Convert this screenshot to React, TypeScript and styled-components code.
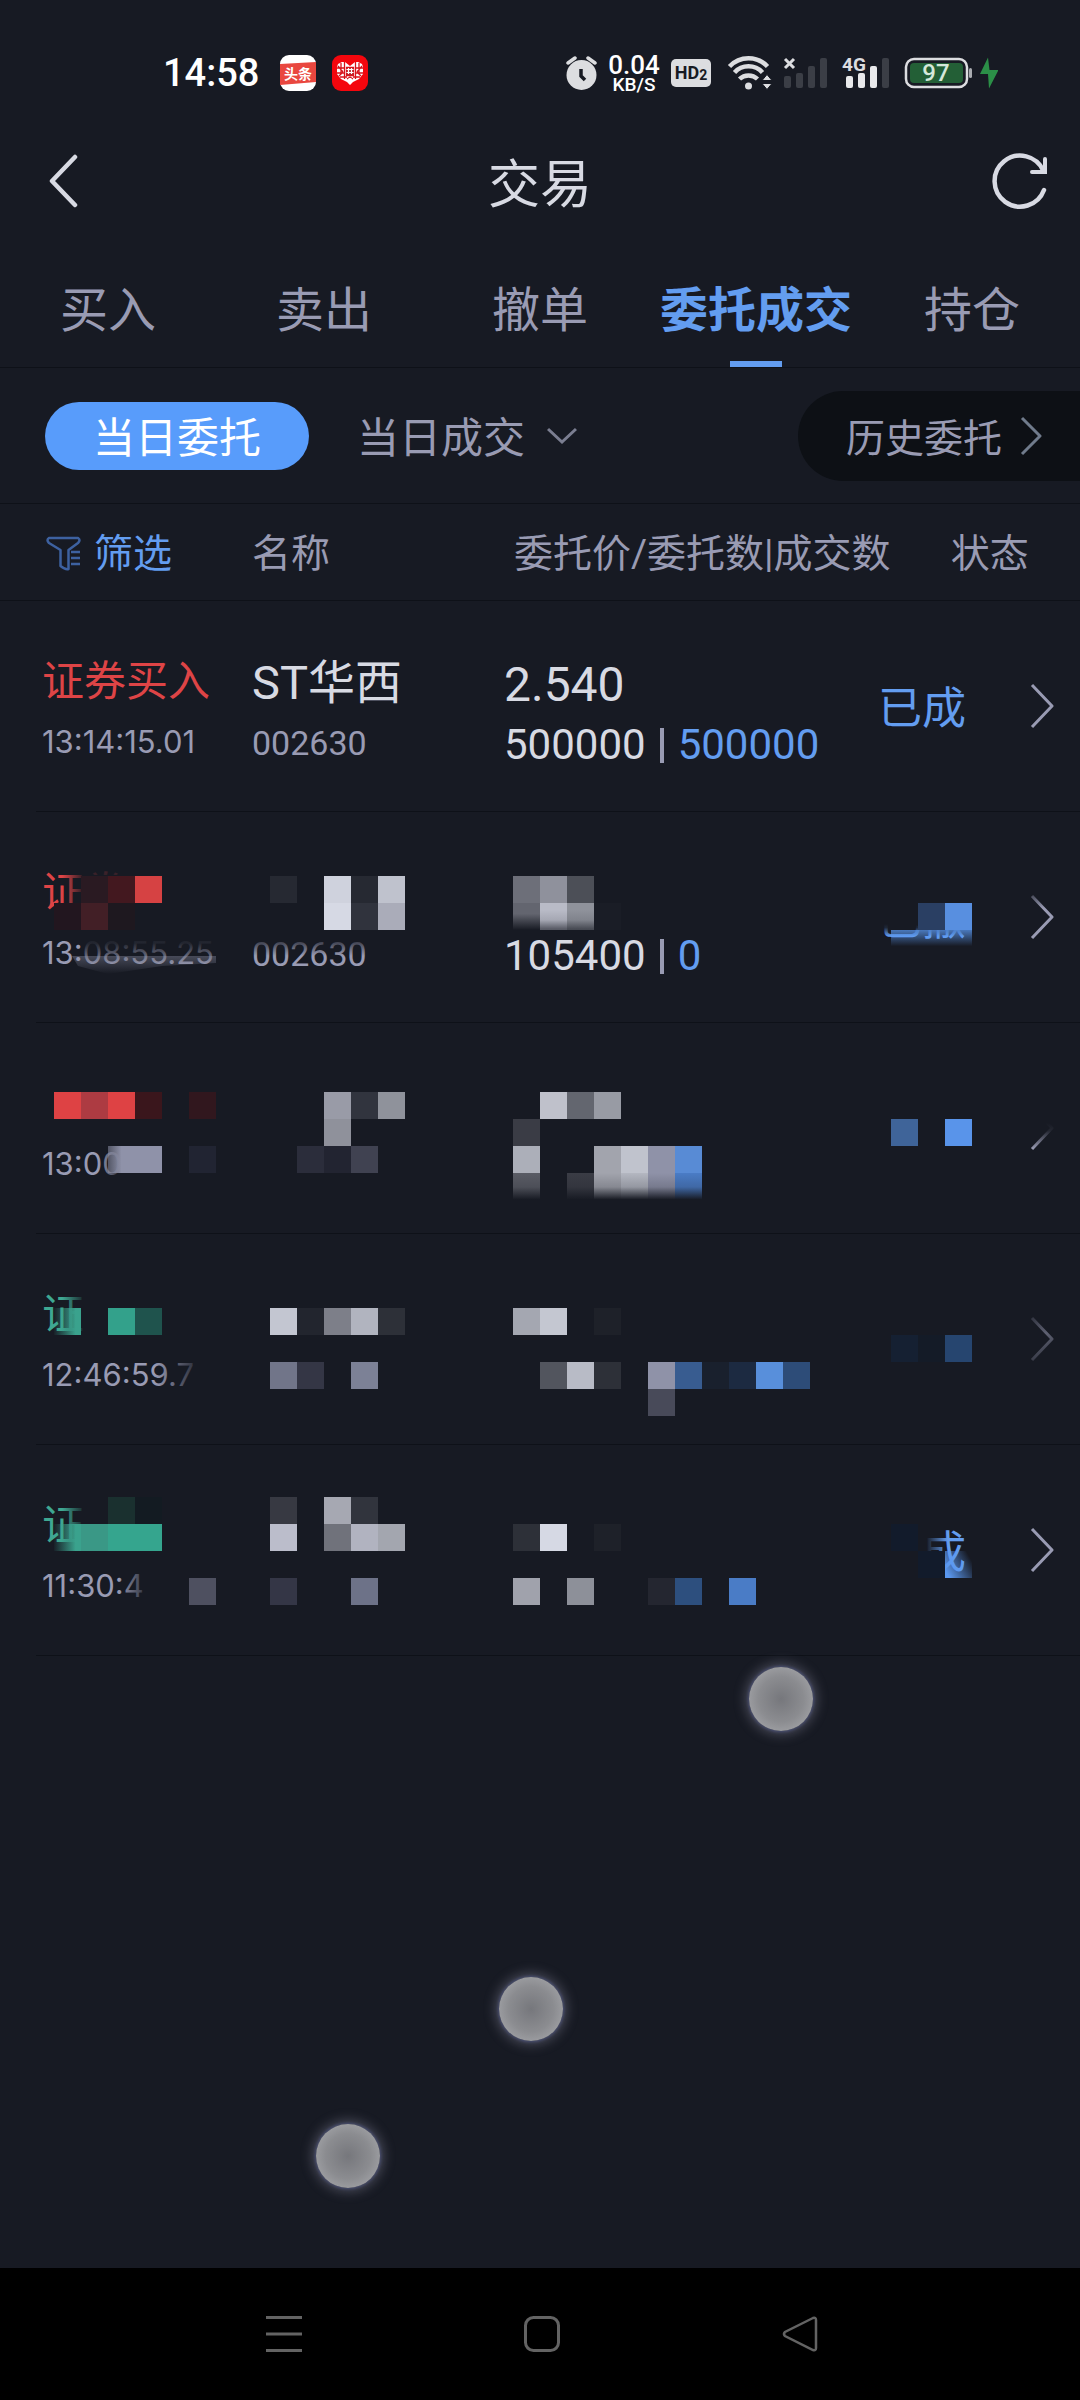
import React from "react";
import styled, { createGlobalStyle } from "styled-components";

const color = {
  page: "#171a23",
  line: "#0e1118",
  muted: "#999bb3",
  bright: "#d8dae3",
  blue: "#639df0",
  pill: "#589cfb",
  red: "#de4446",
  green: "#3fa892",
  well: "#0d1015",
};

const GlobalStyle = createGlobalStyle`
  * { box-sizing: border-box; }
  body {
    margin: 0;
    background: ${color.page};
    font-family: Roboto, "Noto Sans CJK SC", sans-serif;
    -webkit-font-smoothing: antialiased;
  }
  button {
    margin: 0;
    padding: 0;
    border: 0;
    background: none;
    font: inherit;
    color: inherit;
    cursor: pointer;
  }
`;

const Screen = styled.div`
  position: relative;
  display: flex;
  flex-direction: column;
  min-height: 100vh;
  background: ${color.page};
  color: ${color.muted};
`;

/* ---------- status bar ---------- */

const StatusBar = styled.div`
  display: flex;
  align-items: center;
  justify-content: space-between;
  height: 118px;
  padding: 28px 82px 0 163px;
`;

const StatusGroup = styled.div<{ $gap: number }>`
  display: flex;
  align-items: center;
  gap: ${(p) => p.$gap}px;
`;

const Clock = styled.time`
  margin-right: 5px;
  font-size: 38px;
  font-weight: 500;
  line-height: 40px;
  color: #fff;
`;

const Speed = styled.div`
  display: flex;
  flex-direction: column;
  align-items: center;
  width: 54px;
  padding-top: 2px;
  color: #fff;
  font-weight: 500;
`;

const SpeedValue = styled.span`
  font-size: 26px;
  line-height: 22px;
`;

const SpeedUnit = styled.span`
  font-size: 19px;
  line-height: 18px;
`;

const HdBadge = styled.span`
  display: flex;
  align-items: center;
  justify-content: center;
  width: 40px;
  height: 28px;
  border-radius: 5px;
  background: #dcdde0;
  color: ${color.page};
  font-size: 18px;
  font-weight: 700;
  line-height: 28px;
`;

const HdIndex = styled.span`
  padding-top: 4px;
  font-size: 14px;
`;

const NewsIcon = () => (
  <svg width="36" height="36" viewBox="0 0 36 36" role="img" aria-label="头条">
    <rect width="36" height="36" rx="9" fill="#fff" />
    <path d="M0 9 36 7v20L0 30Z" fill="#e9473f" />
    <text x="18" y="24" textAnchor="middle" fontSize="14" fontWeight="700" fill="#fff">
      头条
    </text>
  </svg>
);

const HeartIcon = () => (
  <svg width="36" height="36" viewBox="0 0 36 36" aria-hidden="true">
    <rect width="36" height="36" rx="9" fill="#f4060d" />
    <path d="M5 12 6 9l4-2h3l5 4 5-4h3l4 2 1 3v7l-4 5-6 3-3 3-3-3-6-3-4-5Z" fill="#fff" />
    <g stroke="#d8121a" strokeWidth="1.3" fill="none">
      <path d="M5 13h7M24 13h7M5 18h7M24 18h7M8 22h7M21 22h7M9 8v12M27 8v12M12.500 7v17M23.500 7v17M6 11l5 6M30 11l-5 6M7 21l4-4M29 21l-4-4M15 24l3-2 3 2" />
      <path d="M14.500 12.500h7v8h-7z" fill="#b52b30" />
    </g>
    <path d="M16.500 13v6M19.500 13v6M14.500 14.500h7M14.500 17.500h7" stroke="#fff" strokeWidth="1.2" />
    <circle cx="18" cy="25" r="2" fill="#fff" />
  </svg>
);

const AlarmIcon = () => (
  <svg width="31" height="34" viewBox="0 0 31 34" aria-hidden="true">
    <circle cx="15.500" cy="19" r="15" fill="#dcdde0" />
    <path d="M2 7 9 2M29 7l-7-5" stroke="#dcdde0" strokeWidth="3.500" strokeLinecap="round" />
    <path d="M15 13v7l4 4" stroke={color.page} strokeWidth="3.500" fill="none" />
  </svg>
);

const WifiIcon = () => (
  <svg width="52" height="36" viewBox="0 0 52 36" aria-hidden="true">
    <g fill="none" stroke="#dcdde0" strokeWidth="4.500">
      <path d="M8.500 11.500a26 26 0 0 1 38 0" />
      <path d="M13.500 17.500a19 19 0 0 1 28 0" />
      <path d="M18.500 24a13 13 0 0 1 18 0" />
    </g>
    <circle cx="27.500" cy="31" r="3.500" fill="#dcdde0" />
    <path d="M41 25.500l5-6 5 6zM41 28.500h10l-5 6z" fill="#dcdde0" stroke={color.page} strokeWidth="1" />
  </svg>
);

const BARS = [
  { x: 0, h: 12 },
  { x: 12, h: 15 },
  { x: 24, h: 22 },
  { x: 36, h: 30 },
];

const SignalOffIcon = () => (
  <svg width="45" height="34" viewBox="0 0 45 34" aria-hidden="true">
    {BARS.map((b) => (
      <rect key={b.x} x={b.x + 1} y={32 - b.h} width="7" height={b.h} rx="2" fill="#3b3e46" />
    ))}
    <path d="M2 3l9 9M11 3l-9 9" stroke="#dcdde0" strokeWidth="3" />
  </svg>
);

const SignalIcon = () => (
  <svg width="52" height="40" viewBox="0 -3 52 40" role="img" aria-label="4G">
    {BARS.map((b, i) => (
      <rect key={b.x} x={b.x + 8} y={32 - b.h} width="7" height={b.h} rx="2" fill={i < 3 ? "#e8e9eb" : "#3b3e46"} />
    ))}
    <rect x="4" y="0" width="25" height="17" fill={color.page} />
    <text x="4" y="15" fontSize="19" fontWeight="700" fill="#dcdde0">
      4G
    </text>
  </svg>
);

const BatteryIcon = () => (
  <svg width="98" height="34" viewBox="0 0 98 34" role="img" aria-label="97">
    <rect x="6" y="3" width="61" height="28" rx="8" fill="none" stroke="#dcdde0" strokeWidth="2.500" />
    <rect x="10" y="7" width="53" height="20" rx="4" fill="#235f36" />
    <rect x="69" y="12" width="3" height="10" rx="1.500" fill="#a9abb0" />
    <text x="36" y="25" textAnchor="middle" fontSize="24" fontWeight="500" fill="#d5e8da">
      97
    </text>
    <path d="M88 1.500 80 18h8l1 14.500L98.500 14h-9Z" fill="#2b8f47" />
  </svg>
);

/* ---------- title bar ---------- */

const TitleBar = styled.header`
  display: grid;
  grid-template-columns: 120px 1fr 120px;
  align-items: center;
  height: 132px;
  color: ${color.bright};
`;

const Title = styled.h1`
  margin: 0;
  padding-top: 4px;
  font-size: 52px;
  font-weight: 400;
  line-height: 72px;
  text-align: center;
`;

const BarButton = styled.button<{ $end?: boolean }>`
  display: flex;
  justify-content: ${(p) => (p.$end ? "flex-end" : "flex-start")};
  padding: ${(p) => (p.$end ? "0 32px 6px 0" : "0 0 6px 49px")};
`;

/* ---------- tabs ---------- */

const Tabs = styled.nav`
  display: flex;
  height: 118px;
  border-bottom: 1px solid ${color.line};
`;

const Tab = styled.button<{ $active?: boolean }>`
  position: relative;
  flex: 1 1 0;
  min-width: 0;
  padding-top: 4px;
  font-size: 48px;
  line-height: 64px;
  white-space: nowrap;
  font-weight: ${(p) => (p.$active ? 700 : 400)};
  color: ${(p) => (p.$active ? color.blue : color.muted)};
  &::after {
    content: "";
    position: absolute;
    bottom: 0;
    left: calc(50% - 26px);
    width: 52px;
    height: 6px;
    background: ${(p) => (p.$active ? color.blue : "transparent")};
  }
`;

/* ---------- filter row ---------- */

const Filters = styled.div`
  display: flex;
  align-items: center;
  height: 136px;
  padding-left: 45px;
  border-bottom: 1px solid ${color.line};
  font-size: 42px;
  line-height: 60px;
`;

const ActivePill = styled.button`
  width: 264px;
  height: 68px;
  padding-top: 6px;
  border-radius: 34px;
  background: ${color.pill};
  color: #fff;
`;

const DropButton = styled.button`
  display: flex;
  align-items: center;
  gap: 22px;
  margin-left: 48px;
`;

const ChipText = styled.span`
  padding-top: 6px;
`;

const HistoryLink = styled.a`
  display: flex;
  align-items: center;
  gap: 18px;
  height: 90px;
  margin-left: auto;
  padding: 0 38px 0 48px;
  border-radius: 45px 0 0 45px;
  background: ${color.well};
  color: ${color.muted};
  font-size: 39px;
  text-decoration: none;
`;

const Chevron = ({ w, h, stroke = 3, tone = color.muted }: { w: number; h: number; stroke?: number; tone?: string }) => (
  <svg width={w} height={h} viewBox={`0 0 ${w} ${h}`} aria-hidden="true">
    <path d={`M2 2 ${w - 2} ${h / 2} 2 ${h - 2}`} fill="none" stroke={tone} strokeWidth={stroke} strokeLinejoin="round" />
  </svg>
);

/* ---------- order table ---------- */

const Table = styled.table`
  display: block;
`;

const Head = styled.thead`
  display: block;
`;

const Body = styled.tbody`
  display: block;
`;

const columns = "210px 252px 1fr 152px 50px";

const HeadRow = styled.tr`
  display: grid;
  grid-template-columns: ${columns};
  align-items: center;
  height: 97px;
  padding: 3px 0 0 42px;
  border-bottom: 1px solid ${color.line};
`;

const HeadCell = styled.th<{ $indent?: number; $wide?: boolean }>`
  padding: 0 0 0 ${(p) => p.$indent ?? 0}px;
  font-size: 39px;
  font-weight: 400;
  line-height: 60px;
  text-align: left;
  white-space: nowrap;
  grid-column: ${(p) => (p.$wide ? "span 2" : "auto")};
`;

const FilterButton = styled.button`
  display: flex;
  align-items: center;
  gap: 12px;
  padding-left: 2px;
  color: ${color.blue};
`;

const Row = styled.tr`
  position: relative;
  display: grid;
  grid-template-columns: ${columns};
  height: 211px;
  margin-left: 36px;
  padding: 0 0 0 6px;
  border-bottom: 1px solid ${color.line};
`;

const Cell = styled.td<{ $top?: number; $center?: boolean }>`
  display: flex;
  flex-direction: column;
  align-items: flex-start;
  justify-content: ${(p) => (p.$center ? "center" : "flex-start")};
  padding: ${(p) => p.$top ?? 0}px 0 0;
  white-space: nowrap;
`;

const Side = styled.span<{ $sell?: boolean }>`
  height: 60px;
  font-size: 42px;
  line-height: 60px;
  color: ${(p) => (p.$sell ? color.green : color.red)};
`;

const Time = styled.time`
  font-family: Inter, Roboto, sans-serif;
  font-size: 31px;
  line-height: 60px;
`;

const Name = styled.span`
  height: 60px;
  font-size: 47px;
  line-height: 60px;
  color: ${color.bright};
`;

const Code = styled.span`
  font-size: 34px;
  line-height: 60px;
`;

const Price = styled.span`
  height: 60px;
  font-size: 48px;
  line-height: 60px;
  color: ${color.bright};
`;

const Amount = styled.span`
  display: flex;
  align-items: center;
  gap: 14px;
  font-size: 42px;
  line-height: 60px;
  color: ${color.bright};
`;

const Divider = styled.i`
  width: 4px;
  height: 35px;
  background: ${color.muted};
`;

const Filled = styled.span`
  color: ${color.blue};
`;

const Status = styled.span`
  padding-top: 5px;
  font-size: 44px;
  line-height: 60px;
  color: ${color.blue};
`;

const Mosaic = styled.svg`
  position: absolute;
  top: 0;
  left: -36px;
  pointer-events: none;
`;

const TILE = 27;

type Tile = [col: number, line: number, fill: string];
type Cover = { x: number; y: number; w: number; h: number; from: "left" | "right" | "top" | "bottom" | "none" | "dim" };

type Order = {
  id: string;
  side?: string;
  sell?: boolean;
  time: string;
  name?: string;
  code?: string;
  price?: string;
  amount?: string;
  filled?: string;
  status?: string;
  offset?: number;
  covers?: Cover[];
  tiles?: Tile[];
  fades?: Omit<Cover, "from">[];
};

const ORDERS: Order[] = [
  {
    id: "a",
    side: "证券买入",
    time: "13:14:15.01",
    name: "ST华西",
    code: "002630",
    price: "2.540",
    amount: "500000",
    filled: "500000",
    status: "已成",
  },
  {
    id: "b",
    side: "证券",
    time: "13:08:55.25",
    code: "002630",
    amount: "105400",
    filled: "0",
    status: "已撤",
    offset: 64,
    covers: [
      { x: 62, y: 60, w: 24, h: 50, from: "left" },
      { x: 86, y: 63, w: 48, h: 50, from: "none" },
      { x: 86, y: 46, w: 48, h: 17, from: "top" },
      { x: 84, y: 122, w: 134, h: 32, from: "bottom" },
      { x: 250, y: 118, w: 120, h: 26, from: "bottom" },
      { x: 874, y: 60, w: 100, h: 52, from: "none" },
      { x: 874, y: 112, w: 100, h: 12, from: "bottom" },
      { x: 1028, y: 70, w: 28, h: 26, from: "bottom" },
    ],
    tiles: [
      [3, 0, "#2a1a22"], [4, 0, "#43181f"], [5, 0, "#d64243"],
      [2, 1, "#22161f"], [3, 1, "#421f26"], [4, 1, "#1e181f"],
      [10, 0, "#262932"], [12, 0, "#cfd2dd"], [13, 0, "#262932"], [14, 0, "#bfc2cd"],
      [12, 1, "#d6d9e4"], [13, 1, "#30333d"], [14, 1, "#aaacb9"],
      [19, 0, "#6d6f79"], [20, 0, "#8f919c"], [21, 0, "#4c4f57"],
      [19, 1, "url(#ash)"], [20, 1, "#b9bbc7"], [21, 1, "#8f929b"], [22, 1, "#1a1d26"],
      [34, 1, "#2a3f63"], [35, 1, "#588fe0"],
      [33, 2, "url(#strip)"], [34, 2, "url(#strip)"], [35, 2, "url(#strip)"],
    ],
    fades: [{ x: 540, y: 98, w: 54, h: 20 }],
  },
  {
    id: "c",
    time: "13:00",
    offset: 69,
    covers: [
      { x: 98, y: 118, w: 28, h: 50, from: "left" },
      { x: 1026, y: 76, w: 30, h: 24, from: "none" },
      { x: 1026, y: 100, w: 30, h: 26, from: "bottom" },
    ],
    tiles: [
      [2, 0, "#de4244"], [3, 0, "#ad3b42"], [4, 0, "#de4244"], [5, 0, "#3a161c"], [7, 0, "#31171e"],
      [4, 2, "url(#slate)"], [5, 2, "#8f92a9"], [7, 2, "#212432"],
      [12, 0, "#999ba7"], [13, 0, "#31343e"], [14, 0, "#8f929b"],
      [12, 1, "#8f919b"],
      [11, 2, "#2b2d3b"], [12, 2, "#222431"], [13, 2, "#404251"],
      [20, 0, "#bfc1cb"], [21, 0, "#63666f"], [22, 0, "#989ba4"],
      [19, 1, "#3a3c45"], [19, 2, "#acafb9"],
      [22, 2, "#a2a4ad"], [23, 2, "#c0c3cd"], [24, 2, "#8f92a8"], [25, 2, "#588bd5"],
      [19, 3, "#5a5c65"], [21, 3, "#3a3c45"], [22, 3, "#a2a4ad"],
      [23, 3, "#b4b7c1"], [24, 3, "#8f92a8"], [25, 3, "#4a7cc6"],
      [33, 1, "#3f6499"], [35, 1, "#5994ea"],
    ],
    fades: [{ x: 513, y: 150, w: 190, h: 28 }],
  },
  {
    id: "d",
    side: "证",
    sell: true,
    time: "12:46:59.7",
    offset: 74,
    covers: [
      { x: 62, y: 50, w: 24, h: 56, from: "left" },
      { x: 154, y: 118, w: 50, h: 50, from: "left" },
      { x: 1026, y: 76, w: 30, h: 60, from: "dim" },
    ],
    tiles: [
      [2, 0, "url(#mint)"], [4, 0, "#33a18b"], [5, 0, "#1f534d"],
      [10, 0, "#c3c6d1"], [11, 0, "#22252e"], [12, 0, "#7d7f89"], [13, 0, "#b1b4bf"], [14, 0, "#2d3038"],
      [10, 2, "#717589"], [11, 2, "#343645"], [13, 2, "#7c8196"],
      [19, 0, "#a4a7b1"], [20, 0, "#c4c7d1"], [22, 0, "#1e2129"],
      [20, 2, "#52555e"], [21, 2, "#b8bbc6"], [22, 2, "#2d3038"], [24, 2, "#8f92a8"],
      [25, 2, "#385c90"], [26, 2, "#19202d"], [27, 2, "#1c2a41"], [28, 2, "#588fdb"], [29, 2, "#2d4c78"],
      [24, 3, "#484a59"],
      [33, 1, "#152032"], [34, 1, "#141b27"], [35, 1, "#26456f"],
    ],
  },
  {
    id: "e",
    side: "证",
    sell: true,
    time: "11:30:4",
    status: "已成",
    offset: 52,
    covers: [
      { x: 62, y: 50, w: 24, h: 56, from: "left" },
      { x: 118, y: 118, w: 34, h: 50, from: "left" },
      { x: 874, y: 70, w: 52, h: 66, from: "none" },
      { x: 926, y: 70, w: 22, h: 66, from: "right" },
    ],
    tiles: [
      [4, 0, "#1a302f"], [5, 0, "#131b22"],
      [2, 1, "url(#mint)"], [3, 1, "#3a9886"], [4, 1, "#35a58e"], [5, 1, "#35a58e"],
      [10, 0, "#373942"], [12, 0, "#a6a8b2"], [13, 0, "#31343d"],
      [10, 1, "#bbbdcb"], [12, 1, "#70727b"], [13, 1, "#b1b3c0"], [14, 1, "#a3a6af"],
      [7, 3, "#4e5060"], [10, 3, "#343646"], [13, 3, "#6d7288"],
      [19, 1, "#2d3038"], [20, 1, "#d6d9e4"], [22, 1, "#1e2129"],
      [19, 3, "#a0a2ac"], [21, 3, "#8d9099"], [24, 3, "#242630"], [25, 3, "#2d4f7e"], [27, 3, "#4a7cc6"],
      [33, 1, "#121b2b"], [34, 2, "#121b2b"], [35, 2, "url(#corner)"],
    ],
  },
];

const Gradients = () => (
  <defs>
    <linearGradient id="left">
      <stop offset="0" stopColor={color.page} stopOpacity="0" />
      <stop offset="1" stopColor={color.page} />
    </linearGradient>
    <linearGradient id="right">
      <stop offset="0" stopColor={color.page} />
      <stop offset="1" stopColor={color.page} stopOpacity="0" />
    </linearGradient>
    <linearGradient id="top" x2="0" y2="1">
      <stop offset="0" stopColor={color.page} stopOpacity="0.6" />
      <stop offset="1" stopColor={color.page} stopOpacity="0.85" />
    </linearGradient>
    <linearGradient id="bottom" x2="0" y2="1">
      <stop offset="0" stopColor={color.page} />
      <stop offset="0.3" stopColor={color.page} stopOpacity="0.9" />
      <stop offset="1" stopColor={color.page} stopOpacity="0" />
    </linearGradient>
    <linearGradient id="dim" x2="0.2" y2="1">
      <stop offset="0" stopColor={color.page} stopOpacity="0.95" />
      <stop offset="0.5" stopColor={color.page} stopOpacity="0.45" />
      <stop offset="1" stopColor={color.page} stopOpacity="0.85" />
    </linearGradient>
    <linearGradient id="fade" x2="0" y2="1">
      <stop offset="0" stopColor={color.page} stopOpacity="0" />
      <stop offset="0.5" stopColor={color.page} stopOpacity="0.2" />
      <stop offset="0.95" stopColor={color.page} />
    </linearGradient>
    <linearGradient id="ash" x2="0" y2="1">
      <stop offset="0.4" stopColor="#63656f" />
      <stop offset="1" stopColor={color.page} />
    </linearGradient>
    <linearGradient id="strip" x2="0" y2="1">
      <stop offset="0" stopColor="#5a98f0" stopOpacity="0.75" />
      <stop offset="0.2" stopColor="#5a98f0" stopOpacity="0.5" />
      <stop offset="0.6" stopColor="#5a98f0" stopOpacity="0" />
    </linearGradient>
    <linearGradient id="mint">
      <stop offset="0" stopColor="#3aa28d" stopOpacity="0.05" />
      <stop offset="0.8" stopColor="#3aa28d" />
    </linearGradient>
    <linearGradient id="slate">
      <stop offset="0" stopColor="#8f92a9" stopOpacity="0.5" />
      <stop offset="0.5" stopColor="#8f92a9" />
    </linearGradient>
    <linearGradient id="corner" x1="0" y1="0.7" x2="0.9" y2="0.2">
      <stop offset="0" stopColor="#5a98f0" />
      <stop offset="1" stopColor="#5a98f0" stopOpacity="0" />
    </linearGradient>
    <linearGradient id="glow" x2="0" y2="1">
      <stop offset="0" stopColor="#8f92a9" stopOpacity="0.4" />
      <stop offset="1" stopColor="#8f92a9" stopOpacity="0" />
    </linearGradient>
  </defs>
);

const RowMosaic = ({ order }: { order: Order }) => (
  <Mosaic width="1080" height="210" viewBox="0 0 1080 210" aria-hidden="true">
    <Gradients />
    {order.covers?.map((c, i) => (
      <rect key={i} x={c.x} y={c.y} width={c.w} height={c.h} fill={c.from === "none" ? color.page : `url(#${c.from})`} />
    ))}
    {order.tiles?.map(([col, line, fill]) => (
      <rect key={`${col}-${line}`} x={col * TILE} y={(order.offset ?? 0) + line * TILE} width={TILE} height={TILE} fill={fill} />
    ))}
    {order.fades?.map((f, i) => (
      <rect key={i} x={f.x} y={f.y} width={f.w} height={f.h} fill="url(#fade)" fillOpacity={order.id === "b" ? 0.6 : 1} />
    ))}
    {order.id === "b" && <path d="M72 144h144v7l-54 3-54 8-30-8Z" fill="url(#glow)" />}
  </Mosaic>
);

const ArrowButton = styled.button`
  display: flex;
`;

/* ---------- touch points and navigation ---------- */

const Touch = styled.span<{ $x: number; $y: number }>`
  position: absolute;
  left: ${(p) => p.$x - 32}px;
  top: ${(p) => p.$y - 32}px;
  width: 64px;
  height: 64px;
  border-radius: 50%;
  background: radial-gradient(circle, #76777c 0%, #8b8c90 50%, #9b9ca0 72%);
  box-shadow: 0 0 3px 1px #4a5075, 0 0 12px 4px rgba(130, 130, 150, 0.45);
`;

const Main = styled.main`
  flex: 1;
`;

const NavBar = styled.nav`
  display: flex;
  align-items: center;
  justify-content: center;
  gap: 222px;
  height: 132px;
  padding-left: 4px;
  background: #000;
`;

const NavButton = styled.button`
  display: flex;
`;

const nav = { fill: "none", stroke: "#636363", strokeWidth: 3 };

export default function App() {
  return (
    <Screen>
      <GlobalStyle />
      <StatusBar>
        <StatusGroup $gap={16}>
          <Clock>14:58</Clock>
          <NewsIcon />
          <HeartIcon />
        </StatusGroup>
        <StatusGroup $gap={10}>
          <AlarmIcon />
          <Speed>
            <SpeedValue>0.04</SpeedValue>
            <SpeedUnit>KB/S</SpeedUnit>
          </Speed>
          <HdBadge>
            HD<HdIndex>2</HdIndex>
          </HdBadge>
          <WifiIcon />
          <SignalOffIcon />
          <SignalIcon />
          <BatteryIcon />
        </StatusGroup>
      </StatusBar>

      <TitleBar>
        <BarButton aria-label="返回">
          <svg width="30" height="54" viewBox="0 0 30 54">
            <path d="M26 3 3 27l23 24" fill="none" stroke={color.bright} strokeWidth="4.500" strokeLinecap="round" strokeLinejoin="round" />
          </svg>
        </BarButton>
        <Title>交易</Title>
        <BarButton $end aria-label="刷新">
          <svg width="56" height="56" viewBox="0 0 56 56">
            <path d="M51.500 18A25.500 25.500 0 1 0 52 37" fill="none" stroke={color.bright} strokeWidth="4.500" strokeLinecap="round" />
            <path d="M53 6v13H40" fill="none" stroke={color.bright} strokeWidth="4" strokeLinecap="round" />
          </svg>
        </BarButton>
      </TitleBar>

      <Tabs>
        {["买入", "卖出", "撤单", "委托成交", "持仓"].map((t) => (
          <Tab key={t} $active={t === "委托成交"}>
            {t}
          </Tab>
        ))}
      </Tabs>

      <Main>
        <Filters>
          <ActivePill>当日委托</ActivePill>
          <DropButton>
            <ChipText>当日成交</ChipText>
            <svg width="30" height="18" viewBox="0 0 30 18" aria-hidden="true">
              <path d="M1 2 15 15 29 2" fill="none" stroke="#7b7e91" strokeWidth="3" />
            </svg>
          </DropButton>
          <HistoryLink href="#history">
            <ChipText>历史委托</ChipText>
            <Chevron w={22} h={40} tone="#707b8c" />
          </HistoryLink>
        </Filters>

        <Table>
          <Head>
            <HeadRow>
              <HeadCell>
                <FilterButton>
                  <svg width="38" height="36" viewBox="0 0 38 36" fill="none" stroke="#3d61a0" strokeWidth="2.500" strokeLinejoin="round" aria-hidden="true">
                    <path d="M5 2h29q3 2 0 5L24.500 14v19q-3 1-8-3V14L5 7q-3-3 0-5Z" />
                    <path d="M27 16h9M27 22h9M27 28h9" />
                  </svg>
                  筛选
                </FilterButton>
              </HeadCell>
              <HeadCell>名称</HeadCell>
              <HeadCell $indent={10}>委托价/委托数|成交数</HeadCell>
              <HeadCell $indent={60} $wide>
                状态
              </HeadCell>
            </HeadRow>
          </Head>
          <Body>
            {ORDERS.map((o) => (
              <Row key={o.id}>
                <Cell $top={51}>
                  <Side $sell={o.sell}>{o.side}</Side>
                  <Time>{o.time}</Time>
                </Cell>
                <Cell $top={52}>
                  <Name>{o.name}</Name>
                  {o.code && <Code>{o.code}</Code>}
                </Cell>
                <Cell $top={54}>
                  <Price>{o.price}</Price>
                  {o.amount && (
                    <Amount>
                      {o.amount}
                      <Divider />
                      <Filled>{o.filled}</Filled>
                    </Amount>
                  )}
                </Cell>
                <Cell $center>{o.status && <Status>{o.status}</Status>}</Cell>
                <Cell $center>
                  <ArrowButton aria-label="详情">
                    <Chevron w={24} h={46} />
                  </ArrowButton>
                  {o.tiles && <RowMosaic order={o} />}
                </Cell>
              </Row>
            ))}
          </Body>
        </Table>
      </Main>

      <Touch $x={781} $y={1699} />
      <Touch $x={531} $y={2009} />
      <Touch $x={348} $y={2156} />

      <NavBar>
        <NavButton aria-label="菜单">
          <svg width="36" height="36" viewBox="0 0 36 36" {...nav}>
            <path d="M0 1.500h36M0 18h36M0 34.500h36" />
          </svg>
        </NavButton>
        <NavButton aria-label="主页">
          <svg width="36" height="36" viewBox="0 0 36 36" {...nav}>
            <rect x="1.500" y="1.500" width="33" height="33" rx="8" />
          </svg>
        </NavButton>
        <NavButton aria-label="后退">
          <svg width="36" height="36" viewBox="0 0 36 36" {...nav} strokeWidth="2.500">
            <path d="M31 2 3 16q-2 2 0 4L31 34q3 1 3-2V4q0-3-3-2Z" />
          </svg>
        </NavButton>
      </NavBar>
    </Screen>
  );
}
